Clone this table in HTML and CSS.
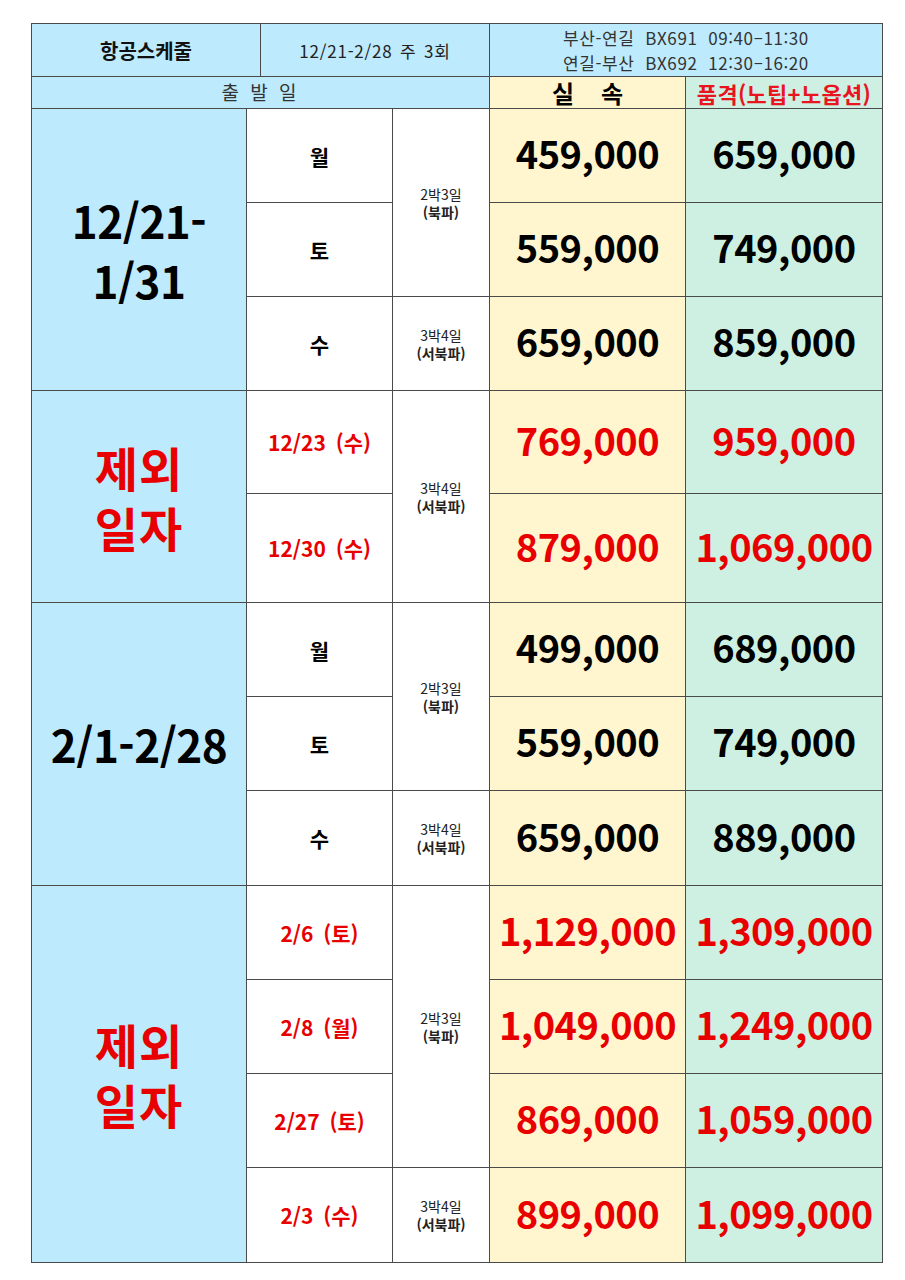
FILE: index.html
```html
<!DOCTYPE html>
<html lang="ko">
<head>
<meta charset="utf-8">
<title>항공스케줄</title>
<link rel="stylesheet" href="styles.css">
</head>
<body>
<div class="page">
  <div class="table">
    <div class="cell blue h-title c2">항공스케줄</div>
    <div class="cell blue h-sub c2">12/21-2/28 주 3회</div>
    <div class="cell blue h-flight c2"><span>부산-연길&nbsp; BX691&nbsp; 09:40–11:30</span><span>연길-부산&nbsp; BX692&nbsp; 12:30–16:20</span></div>

    <div class="cell blue h-dep c4">출 발 일</div>
    <div class="cell yellow h-basic">실&nbsp;&nbsp;&nbsp;&nbsp;속</div>
    <div class="cell mint h-prem">품격(노팁+노옵션)</div>

    <!-- section 1 -->
    <div class="cell blue period r3">12/21-<br>1/31</div>
    <div class="cell day c2">월</div>
    <div class="cell nights r2"><span>2박3일</span><b>(북파)</b></div>
    <div class="cell yellow price">459,000</div>
    <div class="cell mint price">659,000</div>
    <div class="cell day c2">토</div>
    <div class="cell yellow price">559,000</div>
    <div class="cell mint price">749,000</div>
    <div class="cell day c2">수</div>
    <div class="cell nights"><span>3박4일</span><b>(서북파)</b></div>
    <div class="cell yellow price">659,000</div>
    <div class="cell mint price">859,000</div>

    <!-- section 2 -->
    <div class="cell blue period red r2">제외<br>일자</div>
    <div class="cell day red small c2">12/23 (수)</div>
    <div class="cell nights r2"><span>3박4일</span><b>(서북파)</b></div>
    <div class="cell yellow price red">769,000</div>
    <div class="cell mint price red">959,000</div>
    <div class="cell day red small c2">12/30 (수)</div>
    <div class="cell yellow price red">879,000</div>
    <div class="cell mint price red">1,069,000</div>

    <!-- section 3 -->
    <div class="cell blue period r3">2/1-2/28</div>
    <div class="cell day c2">월</div>
    <div class="cell nights r2"><span>2박3일</span><b>(북파)</b></div>
    <div class="cell yellow price">499,000</div>
    <div class="cell mint price">689,000</div>
    <div class="cell day c2">토</div>
    <div class="cell yellow price">559,000</div>
    <div class="cell mint price">749,000</div>
    <div class="cell day c2">수</div>
    <div class="cell nights"><span>3박4일</span><b>(서북파)</b></div>
    <div class="cell yellow price">659,000</div>
    <div class="cell mint price">889,000</div>

    <!-- section 4 -->
    <div class="cell blue period red r4">제외<br>일자</div>
    <div class="cell day red small c2">2/6 (토)</div>
    <div class="cell nights r3"><span>2박3일</span><b>(북파)</b></div>
    <div class="cell yellow price red">1,129,000</div>
    <div class="cell mint price red">1,309,000</div>
    <div class="cell day red small c2">2/8 (월)</div>
    <div class="cell yellow price red">1,049,000</div>
    <div class="cell mint price red">1,249,000</div>
    <div class="cell day red small c2">2/27 (토)</div>
    <div class="cell yellow price red">869,000</div>
    <div class="cell mint price red">1,059,000</div>
    <div class="cell day red small c2">2/3 (수)</div>
    <div class="cell nights"><span>3박4일</span><b>(서북파)</b></div>
    <div class="cell yellow price red">899,000</div>
    <div class="cell mint price red">1,099,000</div>
  </div>
</div>
</body>
</html>
```

FILE: styles.css
```css
html, body {
  margin: 0;
  padding: 0;
  background: #ffffff;
}

body {
  font-family: "Noto Sans CJK KR", "Noto Sans", sans-serif;
  color: #000;
}

.page {
  padding: 23px 0 0 31px;
}

.table {
  display: grid;
  width: max-content;
  grid-template-columns: 214px 13px 131px 96px 195px 196px;
  grid-template-rows: 52px 31px 93px 93px 93px 102px 108px 93px 93px 94px 93px 93px 93px 94px;
  gap: 1px;
  padding: 1px;
  background: #4a4a4a;
}

.cell {
  background: #ffffff;
  display: flex;
  align-items: center;
  justify-content: center;
  text-align: center;
  white-space: nowrap;
  overflow: hidden;
}

.c2 { grid-column: span 2; }
.c4 { grid-column: span 4; }
.r2 { grid-row: span 2; }
.r3 { grid-row: span 3; }
.r4 { grid-row: span 4; }

.blue { background: #bdeafc; }
.yellow { background: #fff5cf; }
.mint { background: #cdf0e2; }

.h-title {
  font-size: 20px;
  font-weight: 700;
  color: #111;
}

.h-sub {
  font-size: 17px;
  letter-spacing: 0.8px;
  word-spacing: 2px;
  color: #222;
}

.h-flight {
  flex-direction: column;
  font-size: 17px;
  line-height: 25px;
  letter-spacing: 0.6px;
  color: #333;
}

.h-dep {
  font-size: 19px;
  line-height: 1.2;
  color: #333;
  letter-spacing: 3px;
}

.h-basic {
  font-size: 24px;
  line-height: 1;
  font-weight: 700;
  overflow: visible;
}

.h-prem {
  font-size: 22px;
  line-height: 1;
  font-weight: 700;
  color: #e8141e;
  letter-spacing: 0.3px;
  overflow: visible;
}

.period {
  font-size: 44px;
  font-weight: 700;
  line-height: 60px;
  letter-spacing: -0.5px;
}

.period.red {
  font-size: 47px;
  letter-spacing: 1px;
}

.day {
  font-size: 21px;
  font-weight: 700;
}

.day.small {
  font-size: 21px;
  word-spacing: 4px;
}

.nights {
  flex-direction: column;
  font-size: 14px;
  line-height: 18px;
  color: #222;
}

.nights b {
  font-weight: 700;
}

.price {
  font-size: 38px;
  font-weight: 700;
  letter-spacing: -0.5px;
  padding-bottom: 6px;
}

.red { color: #e80000; }
```
